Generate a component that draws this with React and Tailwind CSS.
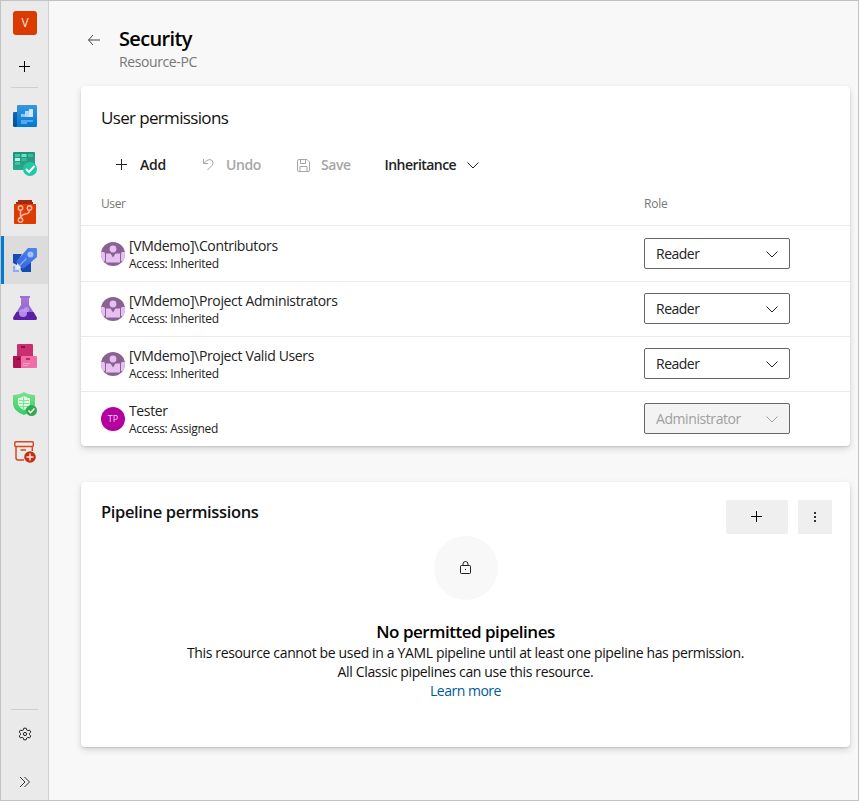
const font = "font-['Open_Sans','Noto_Sans',sans-serif]";

function PlusIcon() {
  return (
    <svg width="12" height="12" viewBox="0 0 12 12" stroke="currentColor" strokeWidth="1" fill="none">
      <path d="M5.500 0v11M0 5.500h11" />
    </svg>
  );
}

function ChevronDown() {
  return (
    <svg width="14" height="14" viewBox="0 0 14 14" stroke="currentColor" strokeWidth="1" fill="none">
      <path d="M1.500 4.500 7 10l5.500-5.500" />
    </svg>
  );
}

function OverviewIcon() {
  return (
    <svg width="24" height="24" viewBox="0 0 24 24">
      <defs>
        <linearGradient id="ov" x2="0" y2="1"><stop stopColor="#3a96dd" /><stop offset="1" stopColor="#0078d7" /></linearGradient>
        <linearGradient id="ovb" x2="0" y2="1"><stop stopColor="#1567b5" /><stop offset="1" stopColor="#004f8f" /></linearGradient>
      </defs>
      <path d="M1 8h4v15H1.500Q0 23 0 21.500V9q0-1 1-1z" fill="url(#ovb)" />
      <path d="M5 1h18q1 0 1 1v20q0 1-1 1H3q1-.5 1-2V2q0-1 1-1z" fill="url(#ov)" />
      <path d="M8 13v-3h4V7h4V5h4v8z" fill="#cfe6fa" />
      <path d="M8 10h4v3H8z" fill="#8cc4f2" />
      <path d="M12 7h4v6h-4z" fill="#b0d7f7" />
      <path d="M8 16h12v2h-6v2H8z" fill="#55a8ec" />
    </svg>
  );
}

function BoardsIcon() {
  return (
    <svg width="24" height="24" viewBox="0 0 24 24">
      <defs><linearGradient id="bo" x2="0" y2="1"><stop stopColor="#21917a" /><stop offset="1" stopColor="#2fa98c" /></linearGradient></defs>
      <rect y="0" width="22" height="18" rx="1" fill="url(#bo)" />
      <path d="M2 2h5v3H2zM2 10h5v3H2z" fill="#3cc9a2" />
      <path d="M2 6h5v3H2z" fill="#b8f5e0" />
      <path d="M8.500 2h5v3h-5z" fill="#6fe3c2" />
      <path d="M15 2h5v3h-5zM8.500 6h5v3h-5z" fill="#38bd99" />
      <circle cx="17" cy="17" r="7" fill="#1fc8a5" />
      <path d="m13 17 3 3 5.500-6" fill="none" stroke="#fff" strokeWidth="2" />
    </svg>
  );
}

function ReposIcon() {
  return (
    <svg width="24" height="24" viewBox="0 0 24 24">
      <path d="M5 0h14v2h1v2h2v2H2V4h1V2h2z" fill="#a52a0a" />
      <path d="M1 4h22v19q0 1-1 1H2q-1 0-1-1z" fill="#dc3c03" />
      <g fill="none" stroke="#ffb9a2" strokeWidth="1.400">
        <circle cx="7.500" cy="8" r="2.200" /><circle cx="16.500" cy="8" r="2.200" /><circle cx="7.500" cy="20" r="2.200" />
        <path d="M7.500 10.200v7.600M16.500 10.200q0 3.300-4 3.800t-5 3.200" />
      </g>
    </svg>
  );
}

function PipelinesIcon() {
  return (
    <svg width="24" height="24" viewBox="0 0 24 24">
      <defs><linearGradient id="pi" x1="1" x2="0" y2="1"><stop stopColor="#5287ef" /><stop offset="1" stopColor="#3362dc" /></linearGradient></defs>
      <path d="M0 6h9l-5 8v3L0 15zM18 14v10H9l-2-4z" fill="#174bb4" />
      <path d="M15 0h8q1 0 1 1v8L10 21 3 14z" fill="url(#pi)" />
      <circle cx="17.500" cy="6.500" r="3" fill="#a4c0fb" />
      <path d="m6.500 17.500 7-7" stroke="#86a9f7" strokeWidth="1.500" />
      <path d="M4.500 16.500 8 20.500l-3.500.5-1.500-1.500z" fill="#e4ecff" />
      <path d="M0 18h2v4h4v2H0z" fill="#8eabf1" />
    </svg>
  );
}

function TestPlansIcon() {
  return (
    <svg width="24" height="24" viewBox="0 0 24 24">
      <defs><linearGradient id="te" x2="0" y2="1"><stop stopColor="#a477dc" /><stop offset="1" stopColor="#8661c5" /></linearGradient></defs>
      <path d="M8 1h8v8l7.500 12q1 3-1.500 3H2q-2.500 0-1.500-3L8 9z" fill="url(#te)" />
      <path d="M3.500 16h17l3 5q1 3-1.500 3H2q-2.500 0-1.500-3z" fill="#5c1fa8" />
      <path d="M7 0h10v2H7z" fill="#9a72cf" />
      <circle cx="10" cy="17" r="4" fill="#c49df0" opacity=".85" />
      <circle cx="13.500" cy="13.500" r="2.600" fill="#c49df0" opacity=".75" />
    </svg>
  );
}

function ArtifactsIcon() {
  return (
    <svg width="24" height="24" viewBox="0 0 24 24">
      <path d="M5 0h14q1 0 1 1v11H4V1q0-1 1-1z" fill="#cb2f70" />
      <path d="M8 2h4v2H8z" fill="#8f1246" />
      <path d="M0 12h9v12H1q-1 0-1-1z" fill="#b01455" />
      <path d="M8 12h15q1 0 1 1v10q0 1-1 1H8z" fill="#ee6fa6" />
      <path d="M4 14h3v2H4z" fill="#7b0b3a" /><path d="M13 14h4v2h-4z" fill="#b92a66" />
      <path d="M10 19.500h7M10 21.500h5" stroke="#f6a1c6" />
    </svg>
  );
}

function ShieldIcon() {
  return (
    <svg width="24" height="24" viewBox="0 0 24 24">
      <defs><linearGradient id="sh" x2="0" y2="1"><stop stopColor="#7ee08e" /><stop offset="1" stopColor="#33cc66" /></linearGradient></defs>
      <path d="M11 0q5 3.500 11 3v9q0 7-11 11Q0 19 0 12V3q6 .5 11-3z" fill="url(#sh)" />
      <path d="M11 4q3 2 6 2v5q0 4-6 7-6-3-6-7V6q3 0 6-2z" fill="#d9fadf" />
      <path d="M10.500 5v12M6 8.500h10M6 11.500h10M7 14.500h8" stroke="#7bdc92" strokeWidth=".9" />
      <circle cx="18.500" cy="18.500" r="5.500" fill="#32a852" />
      <path d="m15.500 18.500 2 2.200 4-4.200" fill="none" stroke="#fff" strokeWidth="1.500" />
    </svg>
  );
}

function ArchiveIcon() {
  return (
    <svg width="24" height="24" viewBox="0 0 24 24" fill="none" stroke="#d9471f" strokeWidth="1.500">
      <rect x="1.800" y="1.800" width="18.500" height="4.700" rx="1" />
      <path d="M3 6.500V18q0 2 2 2h6M19.300 6.500V11M7.500 10H13" />
      <circle cx="17" cy="17" r="5.800" fill="#bf3213" stroke="none" />
      <path d="M17 13.500v7M13.500 17h7" stroke="#ffe5dc" strokeWidth="1.400" />
    </svg>
  );
}

function GearIcon() {
  return (
    <svg width="14" height="14" viewBox="0 0 14 14" fill="none" stroke="#222" strokeWidth="1">
      <path d="M5.800 1.200h2.400l.4 1.700 1.300.7 1.700-.5 1.200 2-1.300 1.200v1.400l1.300 1.200-1.200 2-1.700-.5-1.300.7-.4 1.700H5.800l-.4-1.700-1.300-.7-1.700.5-1.200-2 1.300-1.200V6.300L1.200 5.100l1.200-2 1.700.5 1.300-.7z" />
      <circle cx="7" cy="7" r="1.600" />
    </svg>
  );
}

function GroupAvatar() {
  return (
    <svg className="block shrink-0" width="24" height="24" viewBox="0 0 24 24">
      <defs><clipPath id="avatarClip"><circle cx="12" cy="12" r="12" /></clipPath></defs>
      <g clipPath="url(#avatarClip)">
        <path d="M0 0h24v24H0z" fill="#896292" />
        <path d="M0 10h3q1 .5 1 2v7H0zM24 10h-3q-1 .5-1 2v7h4z" fill="#e7bff3" />
        <path d="M5 11.500h4.500L12 15.500l2.500-4H19V20.500H5z" fill="#e7bff3" />
        <circle cx="12" cy="7" r="3.400" fill="#e7bff3" />
      </g>
    </svg>
  );
}

const services = [
  { name: "overview", Icon: OverviewIcon },
  { name: "boards", Icon: BoardsIcon },
  { name: "repos", Icon: ReposIcon },
  { name: "pipelines", Icon: PipelinesIcon, active: true },
  { name: "tests", Icon: TestPlansIcon },
  { name: "artifacts", Icon: ArtifactsIcon },
  { name: "shield", Icon: ShieldIcon },
  { name: "archive", Icon: ArchiveIcon },
];

function Sidebar() {
  return (
    <nav className="flex w-12 shrink-0 flex-col border-r border-[#d0d0d0] bg-[#eaeaea]">
      <div className="ml-3 mt-2.5 flex h-6 w-6 items-center justify-center rounded-[3px] bg-[#da3b01] text-[12px] text-[#ffe3d8]">V</div>
      <div className="flex h-[52px] items-center justify-center pt-3 text-black"><PlusIcon /></div>
      <div className="mx-2.5 h-px bg-[#cfcfcf]" />
      <div className="mt-1">
        {services.map(({ name, Icon, active }) => (
          <div
            key={name}
            className={active
              ? "flex h-12 items-center border-l-3 border-[#0078d4] bg-[#dcdcdc] pl-[9px]"
              : "flex h-12 items-center pl-3"}
          >
            <Icon />
          </div>
        ))}
      </div>
      <div className="mx-2.5 mt-auto h-px bg-[#cfcfcf]" />
      <div className="flex h-12 items-center justify-center"><GearIcon /></div>
      <div className="flex h-[42px] items-center justify-center pt-1.5">
        <svg width="12" height="12" viewBox="0 0 12 12" fill="none" stroke="#333"><path d="M1 1l5 5-5 5M5.500 1l5 5-5 5" /></svg>
      </div>
    </nav>
  );
}

const users = [
  { name: "[VMdemo]\\Contributors", access: "Access: Inherited", role: "Reader" },
  { name: "[VMdemo]\\Project Administrators", access: "Access: Inherited", role: "Reader" },
  { name: "[VMdemo]\\Project Valid Users", access: "Access: Inherited", role: "Reader" },
  { name: "Tester", access: "Access: Assigned", role: "Administrator", disabled: true },
];

function UserRow({ user }) {
  return (
    <div className="flex h-[55px] items-start border-b border-[#eaeaea] pl-5 pt-[11px] first:h-14 first:pt-3 last:h-[54px] last:border-b-0">
      <div className="flex w-[543px] items-start gap-1">
        <div className="pt-1">
          {user.disabled
            ? <div className="flex h-6 w-6 items-center justify-center rounded-full bg-[#b4009e] text-[9px] text-[#f5d5f1]">TP</div>
            : <GroupAvatar />}
        </div>
        <div className="-mt-px text-[#222]">
          <div className="text-[14px] leading-[18px] tracking-[-0.35px]">{user.name}</div>
          <div className="text-[12px] leading-[17px] tracking-[-0.28px]">{user.access}</div>
        </div>
      </div>
      <div className={user.disabled
        ? "flex h-[31px] w-[146px] items-center justify-between rounded-[2px] border border-[#666] bg-[#f3f3f3] pl-[11px] pr-2.5 text-[14px] tracking-[-0.42px] text-[#a0a0a0]"
        : "flex h-[31px] w-[146px] items-center justify-between rounded-[2px] border border-[#666] pl-[11px] pr-2.5 text-[14px] tracking-[-0.5px] text-[#222]"}>
        <span>{user.role}</span>
        <ChevronDown />
      </div>
    </div>
  );
}

export default function App() {
  return (
    <div className={`flex h-[801px] w-[859px] overflow-hidden border border-[#c2c2c2] bg-[#f8f8f8] ${font}`}>
      <Sidebar />
      <main className="flex flex-1 flex-col pl-8">
        <header className="flex h-[85px] pl-1.5 pt-[25px]">
          <svg className="mt-2 shrink-0" width="14" height="12" viewBox="0 0 14 12" fill="none" stroke="#444"><path d="M6 1 1.500 6 6 11M1.500 6H13" /></svg>
          <div className="ml-[18px]">
            <h1 className="text-[20px] font-semibold leading-[26px] tracking-[-0.65px] text-black">Security</h1>
            <p className="text-[14px] leading-[19px] tracking-[-0.4px] text-[#777]">Resource-PC</p>
          </div>
        </header>

        <section className="h-[360px] w-[769px] rounded-[4px] bg-white shadow-[0_3px_7px_rgba(0,0,0,0.14),0_1px_2px_rgba(0,0,0,0.12)]">
          <h2 className="pl-5 pt-5 text-[17px] leading-6 tracking-[-0.65px] text-[#111]">User permissions</h2>
          <div className="flex h-[70px] items-center pl-[35px] text-[14px] font-semibold text-[#222]">
            <div className="flex w-[86px] items-center gap-3"><PlusIcon /><span className="pb-0.5 tracking-[-0.2px]">Add</span></div>
            <div className="flex w-[95px] items-center gap-[11px] text-[#a6a6a6]">
              <svg className="mb-0.5" width="13" height="13" viewBox="0 0 13 13" fill="none" stroke="currentColor"><path d="M1.500 1v4.500H6M1.500 5.500 5 2.500q3-2 5.200 0 2 2.500-.2 5L5.500 12" /></svg>
              <span className="pb-0.5 tracking-[-0.4px]">Undo</span>
            </div>
            <div className="flex w-[87.500px] items-center gap-[11px] text-[#a6a6a6]">
              <svg width="13" height="13" viewBox="0 0 13 13" fill="none" stroke="currentColor"><path d="M2 .5h8l2.500 2.500v8q0 1.500-1.500 1.500H2Q.5 12.500.5 11V2Q.5.500 2 .5zM3.500.5v4h5v-4M3 12.500v-5h7v5" /></svg>
              <span className="pb-0.5 tracking-[-0.4px]">Save</span>
            </div>
            <div className="flex items-center gap-2.5"><span className="pb-0.5 tracking-[-0.55px]">Inheritance</span><ChevronDown /></div>
          </div>
          <div className="flex h-[26px] border-b border-[#eaeaea] pl-5 text-[12px] leading-[8px] text-[#777]">
            <span className="w-[543px] tracking-[-0.4px]">User</span>
            <span className="tracking-[-0.2px]">Role</span>
          </div>
          <div>
            {users.map((u) => <UserRow key={u.name} user={u} />)}
          </div>
        </section>

        <section className="mt-9 h-[265px] w-[769px] rounded-[4px] bg-white shadow-[0_3px_7px_rgba(0,0,0,0.14),0_1px_2px_rgba(0,0,0,0.12)]">
          <div className="flex h-[54px] justify-between pl-5 pr-[18px] pt-[18px]">
            <h2 className="text-[16.500px] font-semibold leading-6 tracking-[-0.35px] text-[#111]">Pipeline permissions</h2>
            <div className="flex gap-2.5">
              <button className="flex h-[34px] w-[62px] items-center justify-center rounded-[2px] bg-[#efefef]"><PlusIcon /></button>
              <button className="flex h-[34px] w-[34px] items-center justify-center bg-[#efefef]">
                <svg width="2" height="10" viewBox="0 0 2 10" fill="#333"><path d="M0 0h2v2H0zM0 4h2v2H0zM0 8h2v2H0z" /></svg>
              </button>
            </div>
          </div>
          <div className="flex flex-col items-center text-[14px] leading-[19px] text-[#111]">
            <div className="flex h-16 w-16 items-center justify-center rounded-full bg-[#f8f8f8]">
              <svg width="12" height="14" viewBox="0 0 12 14" fill="none" stroke="#222"><rect x=".5" y="4.500" width="10" height="8" rx=".8" /><path d="M3 4.500V3a2.500 2.500 0 0 1 5 0v1.500" /><path d="M5 8h1v1H5z" fill="#222" stroke="none" /></svg>
            </div>
            <h3 className="mt-[21px] text-[17px] font-semibold leading-[22px] tracking-[-0.48px] text-black">No permitted pipelines</h3>
            <p className="tracking-[-0.355px]">This resource cannot be used in a YAML pipeline until at least one pipeline has permission.</p>
            <p className="tracking-[-0.355px]">All Classic pipelines can use this resource.</p>
            <a className="tracking-[-0.5px] text-[#005a9e]">Learn more</a>
          </div>
        </section>
      </main>
    </div>
  );
}
